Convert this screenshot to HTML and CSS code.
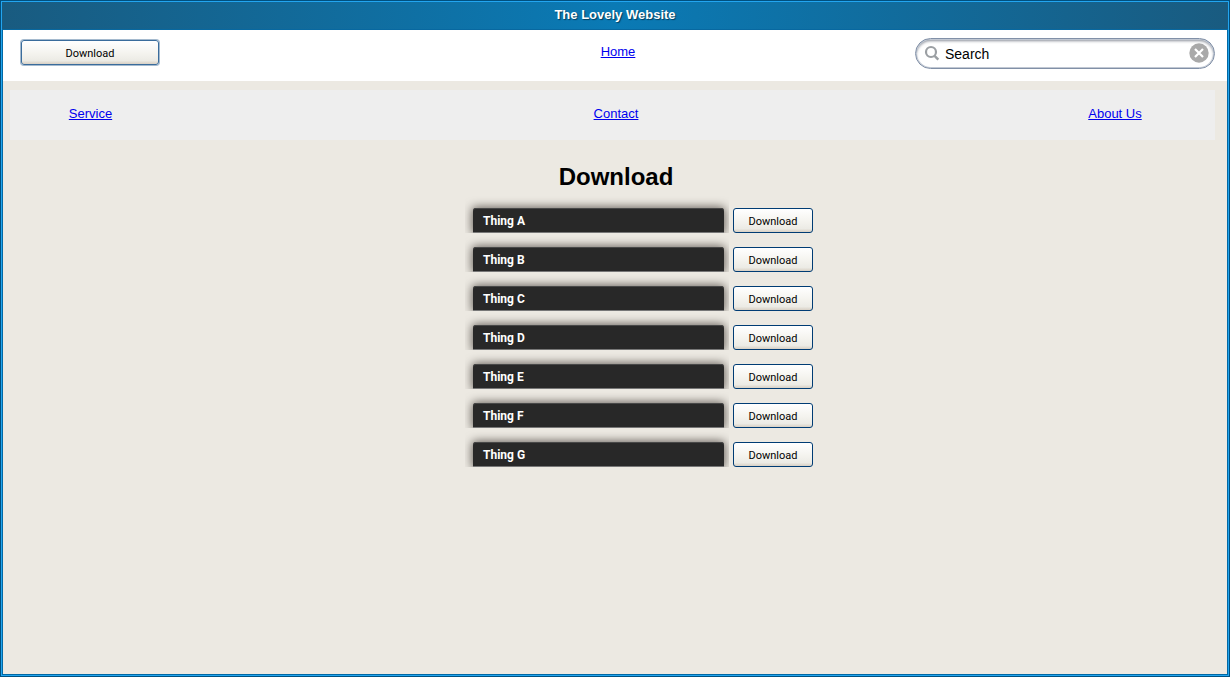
FILE: index.html
```html
<!DOCTYPE html>
<html lang="en">
<head>
<meta charset="utf-8">
<title>The Lovely Website</title>
<link rel="stylesheet" href="styles.css">
</head>
<body>
<div class="window">
  <header class="titlebar">The Lovely Website</header>
  <div class="toolbar">
    <button class="button button-wide" type="button">Download</button>
    <a class="link" href="#home">Home</a>
    <div class="search">
      <svg class="search-icon" viewBox="0 0 16 16" aria-hidden="true"><circle cx="7" cy="7" r="5" fill="none" stroke="#9b9fa3" stroke-width="2.2"/><path d="M10.6 10.8L14.3 14.7" stroke="#9b9fa3" stroke-width="2.4"/></svg>
      <input class="search-input" type="text" value="Search" aria-label="Search">
      <button class="search-clear" type="button" aria-label="Clear search"><svg class="clear-icon" viewBox="0 0 20 20"><circle cx="10" cy="10" r="9.7" fill="#a9a9a9"/><path d="M6 6L14 14M14 6L6 14" stroke="#fff" stroke-width="2.2"/></svg></button>
    </div>
  </div>
  <nav class="nav">
    <a class="link" href="#service">Service</a>
    <a class="link" href="#contact">Contact</a>
    <a class="link" href="#about">About Us</a>
  </nav>
  <main class="content">
    <h1 class="heading">Download</h1>
    <ul class="list">
      <li class="row"><div class="bar-clip"><div class="bar">Thing A</div></div><button class="button" type="button">Download</button></li>
      <li class="row"><div class="bar-clip"><div class="bar">Thing B</div></div><button class="button" type="button">Download</button></li>
      <li class="row"><div class="bar-clip"><div class="bar">Thing C</div></div><button class="button" type="button">Download</button></li>
      <li class="row"><div class="bar-clip"><div class="bar">Thing D</div></div><button class="button" type="button">Download</button></li>
      <li class="row"><div class="bar-clip"><div class="bar">Thing E</div></div><button class="button" type="button">Download</button></li>
      <li class="row"><div class="bar-clip"><div class="bar">Thing F</div></div><button class="button" type="button">Download</button></li>
      <li class="row"><div class="bar-clip"><div class="bar">Thing G</div></div><button class="button" type="button">Download</button></li>
    </ul>
  </main>
</div>
</body>
</html>
```
FILE: styles.css
```css
* {
  box-sizing: border-box;
}

body {
  margin: 0;
  font-family: "Liberation Sans", Arial, sans-serif;
  font-size: 13px;
  color: #000;
}

.window {
  min-height: 100vh;
  padding: 3px;
  background: #ece9e2;
  box-shadow: inset 0 0 0 1px #00507f, inset 0 0 0 2px #22a5f0, inset 0 0 0 3px #0069a5;
}

.titlebar {
  height: 28px;
  margin: -1px -1px 0;
  border-bottom: 1px solid #0868a0;
  background: linear-gradient(90deg, #195b80, #0a7ab5 50%, #195b80);
  color: #fff;
  font-weight: bold;
  line-height: 25px;
  text-align: center;
  text-shadow: 1px 1px 1px #043c5c;
}

.toolbar {
  display: grid;
  grid-template-columns: 1fr auto 1fr;
  align-items: start;
  height: 51px;
  padding: 8px 12px 0 18px;
  background: #fff;
}

.toolbar .link {
  margin-top: 6px;
}

.link {
  color: #00e;
  line-height: 15px;
  text-decoration: underline;
}

.button {
  width: 80px;
  height: 25px;
  padding: 2px 0 0;
  border: 1px solid #003c74;
  border-radius: 3px;
  background: linear-gradient(#fff, #f4f3ee 55%, #ecebe5 85%, #d8d0c4);
  color: #000;
  font-family: Roboto, sans-serif;
  font-size: 11px;
  line-height: 21px;
}

.button-wide {
  width: 138px;
  margin-top: 2px;
  border-color: #3a6c9c;
  box-shadow: 0 0 0 1px #a5bace;
}

.search {
  display: flex;
  align-items: center;
  justify-self: end;
  width: 300px;
  height: 31px;
  padding: 0 5px 2px 8px;
  border: 1px solid #8190a7;
  border-radius: 16px;
  background: #fff;
  box-shadow: inset 0 0 0 1px #c1c8d3, inset 0 2px 3px #8a8f99;
}

.search-icon {
  width: 16px;
  height: 16px;
}

.search-input {
  flex: 1;
  min-width: 0;
  margin-left: 5px;
  padding: 2px 0 0;
  border: 0;
  outline: 0;
  background: transparent;
  font: 14px "Liberation Sans", Arial, sans-serif;
}

.search-clear {
  padding: 0;
  border: 0;
  background: none;
}

.clear-icon {
  display: block;
  width: 20px;
  height: 20px;
}

.nav {
  display: grid;
  grid-template-columns: 161px 1fr 108px;
  height: 50px;
  margin: 9px 12px 0 7px;
  padding: 16px 46px 0 0;
  background: #eee;
  text-align: center;
}

.content {
  padding: 23px 0 0 2px;
}

.heading {
  margin: 0;
  font-size: 24px;
  line-height: 28px;
  text-align: center;
}

.list {
  display: flex;
  flex-direction: column;
  align-items: center;
  margin: 3px 0 0;
  padding: 0 0 0 46px;
  list-style: none;
}

.row {
  display: flex;
  align-items: flex-end;
  gap: 4px;
}

.bar-clip {
  width: 264px;
  padding: 14px 5px 0 8px;
  overflow: hidden;
}

.bar {
  height: 25px;
  padding-left: 10px;
  border-bottom: 1px solid #777;
  border-radius: 3px 3px 0 0;
  background: #282828;
  box-shadow: 0 0 10px 1px #655f59, inset 0 1px #484848;
  color: #fff;
  font-family: Roboto, sans-serif;
  font-size: 12px;
  font-weight: bold;
  line-height: 26px;
}
```
